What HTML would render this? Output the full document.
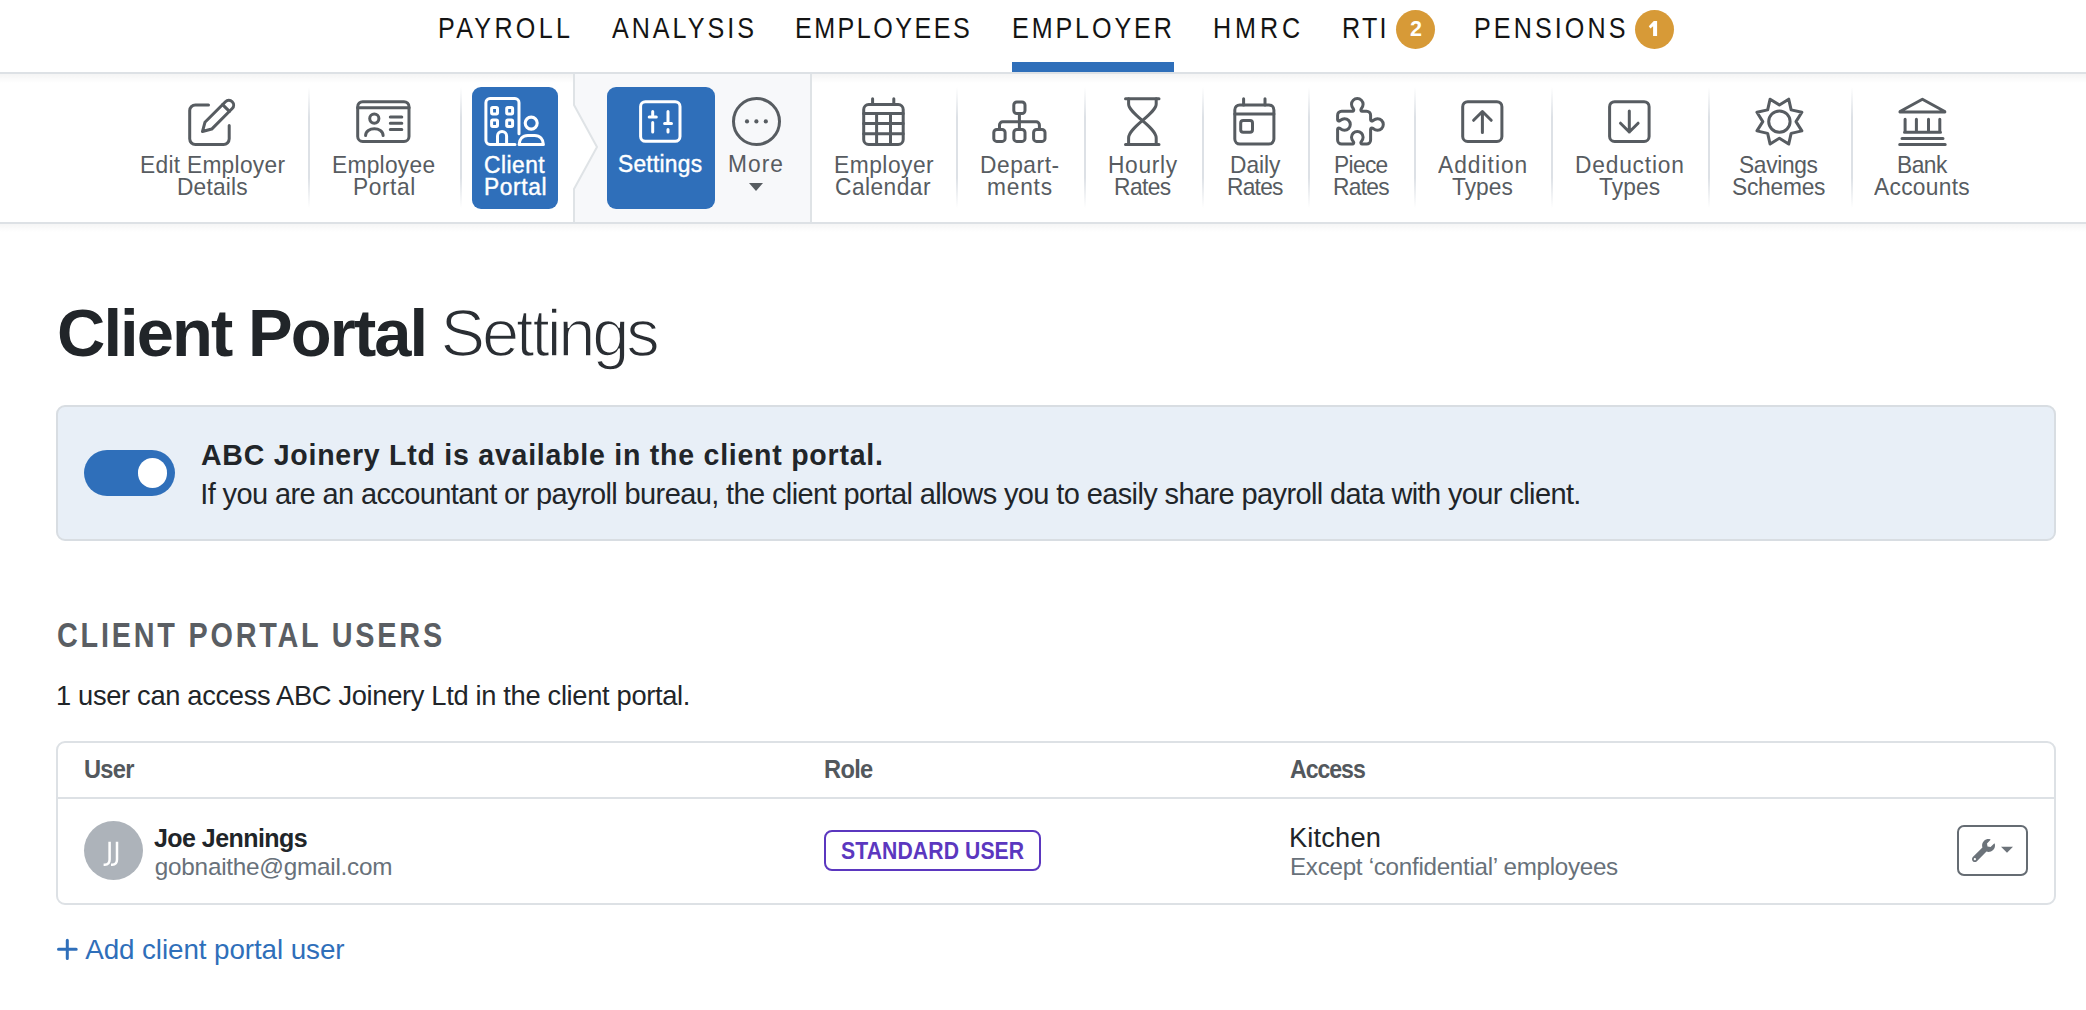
<!DOCTYPE html>
<html><head><meta charset="utf-8">
<style>
html,body{margin:0;padding:0;background:#fff;}
body{width:2086px;height:1010px;overflow:hidden;position:relative;font-family:"Liberation Sans",sans-serif;}
.t{position:absolute;white-space:nowrap;line-height:normal;font-family:"Liberation Sans",sans-serif;}
.abs{position:absolute;}
.sep{position:absolute;top:87px;width:2px;height:121px;background:linear-gradient(to bottom,rgba(221,225,230,0) 0%,#dde1e6 25%,#dde1e6 75%,rgba(221,225,230,0) 100%);}
</style></head><body>
<!-- NAV -->
<div class="abs" style="left:1012px;top:62px;width:162px;height:10px;background:#2f6fba"></div>
<div class="abs" style="left:1396px;top:10px;width:39px;height:39px;border-radius:50%;background:#d79a37"></div>
<div class="abs" style="left:1635px;top:10px;width:39px;height:39px;border-radius:50%;background:#d79a37"></div>
<svg class="abs" style="left:1640px;top:15px" width="30" height="30" viewBox="1640 15 30 30"><path d="M1653.1,36 V26.3 L1650.4,28.4 L1648.8,26.3 L1653.8,21.1 H1657.1 V36 Z" fill="#fff"/></svg>
<!-- TOOLBAR -->
<div class="abs" style="left:0;top:72px;width:2086px;height:2px;background:#dde1e5"></div>
<div class="abs" style="left:0;top:74px;width:2086px;height:9px;background:linear-gradient(to bottom,rgba(0,0,0,0.045),rgba(0,0,0,0))"></div>
<svg class="abs" style="left:0;top:0" width="2086" height="240" viewBox="0 0 2086 240">
  <path d="M574,74 L574,105 L597,147 L574,189 L574,222 L811,222 L811,74 Z" fill="#f7f8fa"/>
  <path d="M574,74 L574,105 L597,147 L574,189 L574,222" fill="none" stroke="#dfe3e6" stroke-width="2"/>
  <rect x="810" y="74" width="2" height="148" fill="#dfe3e6"/>
</svg>
<div class="abs" style="left:0;top:222px;width:2086px;height:2px;background:#dde1e5"></div>
<div class="abs" style="left:0;top:224px;width:2086px;height:8px;background:linear-gradient(to bottom,rgba(0,0,0,0.04),rgba(0,0,0,0))"></div>
<div class="sep" style="left:308px"></div>
<div class="sep" style="left:460px"></div>
<div class="sep" style="left:956px"></div>
<div class="sep" style="left:1084px"></div>
<div class="sep" style="left:1202px"></div>
<div class="sep" style="left:1308px"></div>
<div class="sep" style="left:1414px"></div>
<div class="sep" style="left:1551px"></div>
<div class="sep" style="left:1708px"></div>
<div class="sep" style="left:1851px"></div>
<div class="abs" style="left:472px;top:87px;width:86px;height:122px;border-radius:9px;background:#2f6fba"></div>
<div class="abs" style="left:607px;top:87px;width:108px;height:122px;border-radius:9px;background:#2f6fba"></div>
<svg class="abs" style="left:0;top:0" width="2086" height="240" viewBox="0 0 2086 240" fill="none" stroke="#575c61" stroke-width="3" stroke-linecap="round" stroke-linejoin="round">
  <!-- edit -->
  <path d="M208.5,104.9 H195.4 A5.7,5.7 0 0 0 189.7,110.6 V138.8 A5.7,5.7 0 0 0 195.4,144.5 H223.5 A5.7,5.7 0 0 0 229.2,138.8 V125.4"/>
  <g transform="translate(200.9,133.1) rotate(-45)">
    <path d="M2.2,0 L10.5,-4.8 L39.5,-4.8 A4.8,4.8 0 0 1 39.5,4.8 L10.5,4.8 Z"/>
    <path d="M35.5,-4.8 V4.8"/>
  </g>
  <!-- id card -->
  <rect x="357.7" y="101.7" width="51.3" height="39.7" rx="5"/>
  <path d="M357.7,107.8 H409"/>
  <circle cx="374.3" cy="118.6" r="4.6"/>
  <path d="M365.6,135.6 C365.6,126.5 383.1,126.5 383.1,135.6"/>
  <path d="M390.3,117 H401.8 M390.3,123.3 H401.8 M390.3,129.6 H401.8"/>
  <!-- more -->
  <circle cx="756.5" cy="121.5" r="23"/>
  <circle cx="747" cy="121.4" r="2.1" fill="#575c61" stroke="none"/>
  <circle cx="756.4" cy="121.4" r="2.1" fill="#575c61" stroke="none"/>
  <circle cx="765.8" cy="121.4" r="2.1" fill="#575c61" stroke="none"/>
  <path d="M749,183 H763 L756,191 Z" fill="#575c61" stroke="none"/>
  <!-- calendar -->
  <rect x="863.7" y="104.5" width="39.5" height="39.9" rx="5"/>
  <path d="M872.6,98.7 V104.5 M893.8,98.7 V104.5 M863.7,113.5 H903.2 M863.7,123.6 H903.2 M863.7,133.7 H903.2 M876.6,113.5 V144.4 M890.5,113.5 V144.4"/>
  <!-- departments -->
  <rect x="1013.8" y="101.9" width="11.2" height="11.6" rx="3"/>
  <rect x="993.8" y="129.5" width="11.3" height="11.9" rx="3"/>
  <rect x="1013.8" y="129.5" width="11.2" height="11.9" rx="3"/>
  <rect x="1033.6" y="129.5" width="11.4" height="11.9" rx="3"/>
  <path d="M1019.4,113.5 V129.5 M999.5,129.5 V125 A3.2,3.2 0 0 1 1002.7,121.8 H1036.2 A3.2,3.2 0 0 1 1039.4,125 V129.5"/>
  <!-- hourglass -->
  <path d="M1125.5,98.7 H1159 M1125.5,144.4 H1159"/>
  <path d="M1128.6,98.7 V104 C1128.6,114 1156.2,127 1156.2,138 V144.4 M1156.2,98.7 V104 C1156.2,114 1128.6,127 1128.6,138 V144.4"/>
  <!-- daily -->
  <rect x="1234.8" y="104.9" width="39.1" height="39.2" rx="5"/>
  <path d="M1243.6,98.7 V104.9 M1265,98.7 V104.9 M1234.8,113.9 H1273.9"/>
  <rect x="1240.7" y="120.4" width="11.8" height="11.8" rx="2.5"/>
  <!-- puzzle -->
  <path d="M1341.6,111.2 H1352.5 C1353.5,111.2 1354.2,110 1353.5,109 C1352.6,107.8 1351.5,106.5 1351.5,104.3 A5.8,5.8 0 0 1 1363.1,104.3 C1363.1,106.5 1362,107.8 1361.1,109 C1360.4,110 1361.1,111.2 1362.1,111.2 H1366.6 A4,4 0 0 1 1370.6,115.2 V119.7 C1370.6,120.7 1371.8,121.4 1372.8,120.7 C1374,119.8 1375.3,118.7 1377.5,118.7 A5.8,5.8 0 0 1 1377.5,130.3 C1375.3,130.3 1374,129.2 1372.8,128.3 C1371.8,127.6 1370.6,128.3 1370.6,129.3 V140.1 A4,4 0 0 1 1366.6,144.1 H1362.1 C1361.1,144.1 1360.4,142.9 1361.1,141.9 C1362,140.7 1363.1,139.4 1363.1,137.2 A5.8,5.8 0 0 0 1351.5,137.2 C1351.5,139.4 1352.6,140.7 1353.5,141.9 C1354.2,142.9 1353.5,144.1 1352.5,144.1 H1341.6 A4,4 0 0 1 1337.6,140.1 V129.3 C1337.6,128.3 1338.8,127.6 1339.8,128.3 C1341,129.2 1342.3,130.3 1344.5,130.3 A5.8,5.8 0 0 0 1344.5,118.7 C1342.3,118.7 1341,119.8 1339.8,120.7 C1338.8,121.4 1337.6,120.7 1337.6,119.7 V115.2 A4,4 0 0 1 1341.6,111.2 Z"/>
  <!-- addition -->
  <rect x="1462.7" y="101.7" width="39.2" height="39.7" rx="5"/>
  <path d="M1482.4,111.5 V132.5 M1473.6,120.3 L1482.4,111.5 L1491.2,120.3"/>
  <!-- deduction -->
  <rect x="1609.6" y="101.7" width="39.5" height="39.7" rx="5"/>
  <path d="M1629.3,111 V132 M1620.5,123.2 L1629.3,132 L1638.1,123.2"/>
  <!-- sun -->
  <circle cx="1779.4" cy="121.6" r="10.7"/>
  <path d="M1770.10,99.15 L1779.40,105.00 L1788.70,99.15 L1791.14,109.86 L1801.85,112.30 L1796.00,121.60 L1801.85,130.90 L1791.14,133.34 L1788.70,144.05 L1779.40,138.20 L1770.10,144.05 L1767.66,133.34 L1756.95,130.90 L1762.80,121.60 L1756.95,112.30 L1767.66,109.86 Z"/>
  <!-- bank -->
  <path d="M1922.4,99.3 L1900.5,111.3 C1899.5,111.9 1899.9,112.1 1901,112.1 H1943.8 C1944.9,112.1 1945.3,111.9 1944.3,111.3 Z"/>
  <path d="M1905.1,119.2 V132.3 M1916.4,119.2 V132.3 M1928.5,119.2 V132.3 M1939.8,119.2 V132.3 M1904.5,132.3 H1940.5 M1902,138.5 H1943 M1899.7,144.4 H1945.2"/>
</svg>
<svg class="abs" style="left:0;top:0" width="2086" height="240" viewBox="0 0 2086 240" fill="none" stroke="#fff" stroke-width="3" stroke-linecap="round" stroke-linejoin="round">
  <!-- client portal -->
  <path d="M515,144.4 H490 A4.1,4.1 0 0 1 485.9,140.3 V102.7 A4.1,4.1 0 0 1 490,98.6 H514.9 A4.1,4.1 0 0 1 519,102.7 V133.8"/>
  <rect x="491.6" y="107.6" width="5.9" height="6.4" rx="1.2" stroke-width="3"/>
  <rect x="506.7" y="107.6" width="5.9" height="6.4" rx="1.2" stroke-width="3"/>
  <rect x="491.6" y="120" width="5.9" height="6.4" rx="1.2" stroke-width="3"/>
  <rect x="506.7" y="120" width="5.9" height="6.4" rx="1.2" stroke-width="3"/>
  <path d="M497.5,144.4 V136 A4.55,4.55 0 0 1 506.6,136 V144.4"/>
  <circle cx="531.2" cy="123.1" r="6" stroke-width="3.1"/>
  <path d="M519.1,144.5 C519.1,139.2 522.6,135.4 527.8,135.4 H534.7 C539.9,135.4 543.4,139.2 543.4,144.5 Z"/>
  <!-- settings -->
  <rect x="640.6" y="101.7" width="39.4" height="39.6" rx="4.8"/>
  <path d="M652.7,111.4 V117 M649.2,117 H656.3 M652.7,122.4 V132 M668,111.4 V123.4 M664.6,123.4 H671.5 M668,129.6 V132"/>
</svg>
<!-- CONTENT -->
<div class="abs" style="left:56px;top:405px;width:1996px;height:132px;border:2px solid #d8dde2;border-radius:9px;background:#e8eff7"></div>
<div class="abs" style="left:84px;top:450px;width:91px;height:46px;border-radius:23px;background:#2f6fba"></div>
<div class="abs" style="left:137.5px;top:458.3px;width:29.6px;height:29.6px;border-radius:50%;background:#fff"></div>
<div class="abs" style="left:56px;top:741px;width:1996px;height:160px;border:2px solid #dde1e5;border-radius:9px;background:#fff"></div>
<div class="abs" style="left:58px;top:797px;width:1996px;height:2px;background:#dde1e5"></div>
<div class="abs" style="left:84px;top:821px;width:59px;height:59px;border-radius:50%;background:#adb3ba"></div>
<div class="abs" style="left:824px;top:830px;width:213px;height:37px;border:2px solid #5b37bf;border-radius:8px"></div>
<div class="abs" style="left:1957px;top:825px;width:67px;height:47px;border:2px solid #656c73;border-radius:7px"></div>
<svg class="abs" style="left:1972px;top:839px" width="23" height="23" viewBox="0 0 512 512"><path fill="#6c737a" d="M507.73 109.1c-2.24-9.03-13.54-12.09-20.12-5.510l-74.36 74.36-67.880-11.310-11.310-67.880 74.36-74.36c6.62-6.62 3.43-17.9-5.66-20.16-47.38-11.74-99.55.91-136.58 37.93-39.64 39.64-50.55 97.1-34.05 147.2L18.74 402.76c-24.99 24.99-24.99 65.51 0 90.5 24.99 24.99 65.51 24.99 90.5 0l213.21-213.21c50.12 16.71 107.47 5.68 147.37-34.22 37.07-37.07 49.7-89.32 37.91-136.73zM64 472c-13.25 0-24-10.75-24-24 0-13.26 10.75-24 24-24s24 10.74 24 24c0 13.25-10.75 24-24 24z"/></svg>
<svg class="abs" style="left:2000px;top:846px" width="14" height="8" viewBox="0 0 14 8"><path d="M1,0.8 H13 L7,6.8 Z" fill="#6c737a"/></svg>
<svg class="abs" style="left:0;top:820px" width="160" height="70" viewBox="0 820 160 70" fill="none" stroke="#fff" stroke-width="2.5">
  <path d="M109.6,841.7 V859.5 Q109.6,864.7 104.8,864.7 H103.6"/>
  <path d="M117,841.7 V859.5 Q117,864.7 112.2,864.7 H111"/>
</svg>
<svg class="abs" style="left:50px;top:930px" width="40" height="40" viewBox="50 930 40 40" fill="none" stroke="#2f6fba" stroke-width="3" stroke-linecap="round">
  <path d="M67.3,940.2 V958.4 M58.5,949.3 H76.2"/>
</svg>
<div class="t" style="left:438.28px;top:12.00px;font-size:29.2px;font-weight:normal;color:#141414;letter-spacing:3.847px;transform:scaleX(0.860);transform-origin:0 0;">PAYROLL</div>
<div class="t" style="left:611.90px;top:12.00px;font-size:29.2px;font-weight:normal;color:#141414;letter-spacing:3.487px;transform:scaleX(0.860);transform-origin:0 0;">ANALYSIS</div>
<div class="t" style="left:795.38px;top:12.00px;font-size:29.2px;font-weight:normal;color:#141414;letter-spacing:2.889px;transform:scaleX(0.860);transform-origin:0 0;">EMPLOYEES</div>
<div class="t" style="left:1012.08px;top:12.00px;font-size:29.2px;font-weight:normal;color:#141414;letter-spacing:3.381px;transform:scaleX(0.860);transform-origin:0 0;">EMPLOYER</div>
<div class="t" style="left:1212.78px;top:12.00px;font-size:29.2px;font-weight:normal;color:#141414;letter-spacing:4.595px;transform:scaleX(0.860);transform-origin:0 0;">HMRC</div>
<div class="t" style="left:1341.98px;top:12.00px;font-size:29.2px;font-weight:normal;color:#141414;letter-spacing:2.647px;transform:scaleX(0.860);transform-origin:0 0;">RTI</div>
<div class="t" style="left:1473.98px;top:12.00px;font-size:29.2px;font-weight:normal;color:#141414;letter-spacing:3.605px;transform:scaleX(0.860);transform-origin:0 0;">PENSIONS</div>
<div class="t" style="left:1410.00px;top:17.00px;font-size:21.5px;font-weight:bold;color:#fff;letter-spacing:0.000px;">2</div>
<div class="t" style="left:140.06px;top:151.00px;font-size:24.2px;font-weight:normal;color:#575c61;letter-spacing:0.307px;transform:scaleX(0.940);transform-origin:0 0;">Edit Employer</div>
<div class="t" style="left:177.06px;top:172.50px;font-size:24.2px;font-weight:normal;color:#575c61;letter-spacing:0.201px;transform:scaleX(0.940);transform-origin:0 0;">Details</div>
<div class="t" style="left:332.36px;top:151.00px;font-size:24.2px;font-weight:normal;color:#575c61;letter-spacing:0.298px;transform:scaleX(0.940);transform-origin:0 0;">Employee</div>
<div class="t" style="left:353.06px;top:172.50px;font-size:24.2px;font-weight:normal;color:#575c61;letter-spacing:0.604px;transform:scaleX(0.940);transform-origin:0 0;">Portal</div>
<div class="t" style="left:728.46px;top:150.20px;font-size:24.2px;font-weight:normal;color:#575c61;letter-spacing:1.122px;transform:scaleX(0.940);transform-origin:0 0;">More</div>
<div class="t" style="left:833.66px;top:151.00px;font-size:24.2px;font-weight:normal;color:#575c61;letter-spacing:0.557px;transform:scaleX(0.940);transform-origin:0 0;">Employer</div>
<div class="t" style="left:835.46px;top:172.50px;font-size:24.2px;font-weight:normal;color:#575c61;letter-spacing:0.490px;transform:scaleX(0.940);transform-origin:0 0;">Calendar</div>
<div class="t" style="left:980.46px;top:151.00px;font-size:24.2px;font-weight:normal;color:#575c61;letter-spacing:0.588px;transform:scaleX(0.940);transform-origin:0 0;">Depart-</div>
<div class="t" style="left:987.06px;top:172.50px;font-size:24.2px;font-weight:normal;color:#575c61;letter-spacing:0.828px;transform:scaleX(0.940);transform-origin:0 0;">ments</div>
<div class="t" style="left:1108.26px;top:151.00px;font-size:24.2px;font-weight:normal;color:#575c61;letter-spacing:0.721px;transform:scaleX(0.940);transform-origin:0 0;">Hourly</div>
<div class="t" style="left:1114.26px;top:172.50px;font-size:24.2px;font-weight:normal;color:#575c61;letter-spacing:-0.576px;transform:scaleX(0.940);transform-origin:0 0;">Rates</div>
<div class="t" style="left:1229.66px;top:151.00px;font-size:24.2px;font-weight:normal;color:#575c61;letter-spacing:-0.012px;transform:scaleX(0.940);transform-origin:0 0;">Daily</div>
<div class="t" style="left:1227.06px;top:172.50px;font-size:24.2px;font-weight:normal;color:#575c61;letter-spacing:-0.789px;transform:scaleX(0.940);transform-origin:0 0;">Rates</div>
<div class="t" style="left:1333.76px;top:151.00px;font-size:24.2px;font-weight:normal;color:#575c61;letter-spacing:-0.694px;transform:scaleX(0.940);transform-origin:0 0;">Piece</div>
<div class="t" style="left:1333.16px;top:172.50px;font-size:24.2px;font-weight:normal;color:#575c61;letter-spacing:-0.762px;transform:scaleX(0.940);transform-origin:0 0;">Rates</div>
<div class="t" style="left:1437.60px;top:151.00px;font-size:24.2px;font-weight:normal;color:#575c61;letter-spacing:1.079px;transform:scaleX(0.940);transform-origin:0 0;">Addition</div>
<div class="t" style="left:1451.90px;top:172.50px;font-size:24.2px;font-weight:normal;color:#575c61;letter-spacing:0.061px;transform:scaleX(0.940);transform-origin:0 0;">Types</div>
<div class="t" style="left:1575.46px;top:151.00px;font-size:24.2px;font-weight:normal;color:#575c61;letter-spacing:0.868px;transform:scaleX(0.940);transform-origin:0 0;">Deduction</div>
<div class="t" style="left:1598.60px;top:172.50px;font-size:24.2px;font-weight:normal;color:#575c61;letter-spacing:0.114px;transform:scaleX(0.940);transform-origin:0 0;">Types</div>
<div class="t" style="left:1739.46px;top:151.00px;font-size:24.2px;font-weight:normal;color:#575c61;letter-spacing:-0.347px;transform:scaleX(0.940);transform-origin:0 0;">Savings</div>
<div class="t" style="left:1732.06px;top:172.50px;font-size:24.2px;font-weight:normal;color:#575c61;letter-spacing:-0.239px;transform:scaleX(0.940);transform-origin:0 0;">Schemes</div>
<div class="t" style="left:1897.06px;top:151.00px;font-size:24.2px;font-weight:normal;color:#575c61;letter-spacing:-0.509px;transform:scaleX(0.940);transform-origin:0 0;">Bank</div>
<div class="t" style="left:1874.40px;top:172.50px;font-size:24.2px;font-weight:normal;color:#575c61;letter-spacing:0.329px;transform:scaleX(0.940);transform-origin:0 0;">Accounts</div>
<div class="t" style="left:484.06px;top:151.00px;font-size:24.2px;font-weight:normal;color:#fff;letter-spacing:0.542px;transform:scaleX(0.940);transform-origin:0 0;-webkit-text-stroke:0.45px #fff;">Client</div>
<div class="t" style="left:483.86px;top:172.50px;font-size:24.2px;font-weight:normal;color:#fff;letter-spacing:0.646px;transform:scaleX(0.940);transform-origin:0 0;-webkit-text-stroke:0.45px #fff;">Portal</div>
<div class="t" style="left:618.06px;top:150.20px;font-size:24.2px;font-weight:normal;color:#fff;letter-spacing:0.285px;transform:scaleX(0.940);transform-origin:0 0;-webkit-text-stroke:0.45px #fff;">Settings</div>
<div class="t" style="left:57.00px;top:294.00px;font-size:66.9px;font-weight:bold;color:#212529;letter-spacing:-1.898px;">Client Portal</div>
<div class="t" style="left:440.50px;top:294.00px;font-size:66.9px;font-weight:normal;color:#2a2e33;letter-spacing:-3.207px;-webkit-text-stroke:1.6px #fff;">Settings</div>
<div class="t" style="left:201.40px;top:437.60px;font-size:30px;font-weight:bold;color:#212529;letter-spacing:0.801px;transform:scaleX(0.950);transform-origin:0 0;">ABC Joinery Ltd is available in the client portal.</div>
<div class="t" style="left:200.30px;top:477.50px;font-size:29px;font-weight:normal;color:#212529;letter-spacing:-0.618px;">If you are an accountant or payroll bureau, the client portal allows you to easily share payroll data with your client.</div>
<div class="t" style="left:56.66px;top:616.00px;font-size:34.3px;font-weight:bold;color:#5a5e63;letter-spacing:3.313px;transform:scaleX(0.840);transform-origin:0 0;">CLIENT PORTAL USERS</div>
<div class="t" style="left:56.00px;top:679.60px;font-size:27.3px;font-weight:normal;color:#212529;letter-spacing:-0.334px;">1 user can access ABC Joinery Ltd in the client portal.</div>
<div class="t" style="left:84.35px;top:755.30px;font-size:24.9px;font-weight:bold;color:#53585d;letter-spacing:-0.782px;transform:scaleX(0.950);transform-origin:0 0;">User</div>
<div class="t" style="left:823.65px;top:755.20px;font-size:24.9px;font-weight:bold;color:#53585d;letter-spacing:-0.733px;transform:scaleX(0.950);transform-origin:0 0;">Role</div>
<div class="t" style="left:1290.00px;top:755.30px;font-size:24.9px;font-weight:bold;color:#53585d;letter-spacing:-1.140px;transform:scaleX(0.930);transform-origin:0 0;">Access</div>
<div class="t" style="left:153.80px;top:822.80px;font-size:26.3px;font-weight:bold;color:#212529;letter-spacing:-0.580px;transform:scaleX(0.950);transform-origin:0 0;">Joe Jennings</div>
<div class="t" style="left:154.80px;top:852.90px;font-size:24.3px;font-weight:normal;color:#68717a;letter-spacing:-0.243px;">gobnaithe@gmail.com</div>
<div class="t" style="left:840.90px;top:836.80px;font-size:24.1px;font-weight:bold;color:#5b37bf;letter-spacing:0.091px;transform:scaleX(0.880);transform-origin:0 0;">STANDARD USER</div>
<div class="t" style="left:1289.00px;top:822.00px;font-size:27.3px;font-weight:normal;color:#212529;letter-spacing:0.139px;">Kitchen</div>
<div class="t" style="left:1290.00px;top:852.80px;font-size:24.2px;font-weight:normal;color:#68717a;letter-spacing:-0.279px;">Except ‘confidential’ employees</div>
<div class="t" style="left:85.20px;top:933.80px;font-size:27.8px;font-weight:normal;color:#2f6fba;letter-spacing:-0.084px;">Add client portal user</div>
</body></html>
